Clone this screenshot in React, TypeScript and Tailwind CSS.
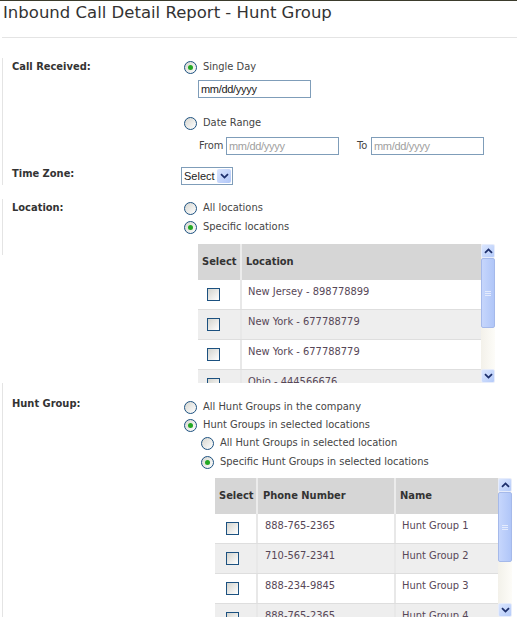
// Inbound Call Detail Report - Hunt Group
const FONT = "font-['DejaVu_Sans_Condensed','DejaVu_Sans',sans-serif]";

function Radio({ checked = false }: { checked?: boolean }) {
  return (
    <span className="flex h-[13px] w-[13px] shrink-0 items-center justify-center rounded-full border border-[#1c5180] bg-[linear-gradient(135deg,#d6d6d0,#ffffff)]">
      {checked && <span className="h-[5px] w-[5px] rounded-full bg-[#23a823]" />}
    </span>
  );
}

function Checkbox() {
  return (
    <span className="block h-[13px] w-[13px] border border-[#1c5180] bg-[linear-gradient(135deg,#d4d4ce,#ffffff)]" />
  );
}

function Chevron({ up = false }: { up?: boolean }) {
  return (
    <svg width="9" height="6" viewBox="0 0 9 6" className={up ? 'rotate-180' : ''}>
      <path d="M1 1.2 L4.5 4.6 L8 1.2" fill="none" stroke="#1d2f6b" strokeWidth="1.8" />
    </svg>
  );
}

function RadioOption({ label, checked, indent = false }: { label: string; checked?: boolean; indent?: boolean }) {
  return (
    <div className={`flex h-[18px] items-center gap-[6px] ${indent ? 'ml-[20px]' : 'ml-[3px]'}`}>
      <Radio checked={checked} />
      <span className="text-[11px] text-[#454545]">{label}</span>
    </div>
  );
}

function DateInput({ placeholder, value }: { placeholder?: string; value?: string }) {
  return (
    <div className="flex h-[18px] w-[113px] items-center border border-[#7f9db9] bg-white px-[2px] font-['Liberation_Sans',sans-serif] text-[11px] tracking-[-0.3px]">
      {value ? <span className="text-[#222]">{value}</span> : <span className="text-[#a0a0a0]">{placeholder}</span>}
    </div>
  );
}

function Scrollbar() {
  return (
    <div className="flex w-[14px] shrink-0 flex-col bg-[linear-gradient(90deg,#f3f1ea,#fdfcf8)]">
      <div className="flex h-[14px] items-center justify-center rounded-[2px] border border-[#e6ecfb] bg-[linear-gradient(135deg,#dbe6fe,#b5cbf9)]">
        <Chevron up />
      </div>
      <div className="flex h-[70px] items-center justify-center rounded-[2px] border border-[#a5b9ea] bg-[linear-gradient(90deg,#c6d6fc,#b0c6f8)]">
        <div className="flex flex-col gap-[1px]">
          <span className="h-px w-[6px] bg-[#e4ebfd]" />
          <span className="h-px w-[6px] bg-[#e4ebfd]" />
          <span className="h-px w-[6px] bg-[#e4ebfd]" />
        </div>
      </div>
      <div className="flex-1" />
      <div className="flex h-[14px] items-center justify-center rounded-[2px] border border-[#e6ecfb] bg-[linear-gradient(135deg,#dbe6fe,#b5cbf9)]">
        <Chevron />
      </div>
    </div>
  );
}

const locations = ['New Jersey - 898778899', 'New York - 677788779', 'New York - 677788779', 'Ohio - 444566676'];

const huntGroups = [
  { phone: '888-765-2365', name: 'Hunt Group 1' },
  { phone: '710-567-2341', name: 'Hunt Group 2' },
  { phone: '888-234-9845', name: 'Hunt Group 3' },
  { phone: '888-765-2365', name: 'Hunt Group 4' },
];

function LocationTable() {
  return (
    <div className="ml-[17px] mt-[8px] flex h-[139px] w-[297px] overflow-hidden">
      <div className="w-[283px] text-[11px]">
        <div className="flex h-[36px] bg-[#d6d6d6] font-bold text-[#333]">
          <div className="flex w-[44px] items-center border-r-2 border-[#ececec] pl-[4px]">Select</div>
          <div className="flex flex-1 items-center pl-[4px]">Location</div>
        </div>
        {locations.map((loc, i) => (
          <div key={i} className={`flex h-[30px] border-b border-[#dedede] ${i % 2 ? 'bg-[#eeeeee]' : 'bg-white'}`}>
            <div className="flex w-[44px] items-center border-r-2 border-[#e8e8e8] pl-[9px]">
              <Checkbox />
            </div>
            <div className="flex-1 pl-[6px] pt-[4px] leading-4 text-[#574757]">{loc}</div>
          </div>
        ))}
      </div>
      <Scrollbar />
    </div>
  );
}

function HuntGroupTable() {
  return (
    <div className="ml-[34px] mt-[7px] flex h-[139px] w-[297px] overflow-hidden">
      <div className="w-[283px] text-[11px]">
        <div className="flex h-[36px] bg-[#d6d6d6] font-bold text-[#333]">
          <div className="flex w-[43px] items-center border-r-2 border-[#ececec] pl-[4px]">Select</div>
          <div className="flex w-[138px] items-center border-r-2 border-[#ececec] pl-[5px]">Phone Number</div>
          <div className="flex flex-1 items-center pl-[4px]">Name</div>
        </div>
        {huntGroups.map((hg, i) => (
          <div key={i} className={`flex h-[30px] border-b border-[#dedede] ${i % 2 ? 'bg-[#eeeeee]' : 'bg-white'}`}>
            <div className="flex w-[43px] items-center border-r-2 border-[#e8e8e8] pl-[11px]">
              <Checkbox />
            </div>
            <div className="w-[138px] border-r-2 border-[#e8e8e8] pl-[7px] pt-[4px] leading-4 text-[#574757]">{hg.phone}</div>
            <div className="flex-1 pl-[6px] pt-[4px] leading-4 text-[#574757]">{hg.name}</div>
          </div>
        ))}
      </div>
      <Scrollbar />
    </div>
  );
}

function Label({ children }: { children: string }) {
  return <div className="flex h-[18px] items-center text-[11px] font-bold text-[#333]">{children}</div>;
}

export default function App() {
  return (
    <div className={`min-h-[621px] w-[517px] border-t border-[#3b3b2c] bg-white ${FONT}`}>
      {/* 标题 */}
      <h1 className="h-[36px] pl-[3px] pt-[1px] font-['DejaVu_Sans',sans-serif] text-[16.5px] leading-[22px] text-[#333]">
        Inbound Call Detail Report - Hunt Group
      </h1>

      <div className="ml-[2px] border-t border-[#e4e4e4]">
        {/* Call Received */}
        <div className="flex pt-[20px]">
          <div className="w-[179px] shrink-0 border-l border-[#e4e4e4] pl-[9px]">
            <Label>Call Received:</Label>
          </div>
          <div className="flex flex-col">
            <RadioOption label="Single Day" checked />
            <div className="ml-[17px] mt-[4px]">
              <DateInput value="mm/dd/yyyy" />
            </div>
            <div className="mt-[16px]">
              <RadioOption label="Date Range" />
            </div>
            <div className="mt-[5px] flex items-center">
              <span className="ml-[18px] w-[27px] text-[11px] text-[#454545]">From</span>
              <DateInput placeholder="mm/dd/yyyy" />
              <span className="ml-[18px] w-[14px] text-[11px] text-[#454545]">To</span>
              <DateInput placeholder="mm/dd/yyyy" />
            </div>
          </div>
        </div>

        {/* Time Zone */}
        <div className="flex">
          <div className="w-[179px] shrink-0 border-l border-[#e4e4e4] pl-[9px] pt-[10px]">
            <Label>Time Zone:</Label>
          </div>
          <div className="pt-[12px]">
            <div className="flex h-[18px] w-[52px] items-center border border-[#7f9db9] bg-white pl-[2px] pr-px font-['Liberation_Sans',sans-serif] text-[11px] text-[#222]">
              <span className="flex-1">Select</span>
              <span className="flex h-[14px] w-[14px] items-center justify-center rounded-[2px] bg-[linear-gradient(135deg,#dbe6fe,#b0c6f8)]">
                <Chevron />
              </span>
            </div>
          </div>
        </div>

        {/* Location */}
        <div className="flex pt-[14px]">
          <div className="h-[56px] w-[179px] shrink-0 self-start border-l border-[#e4e4e4] pl-[9px]">
            <Label>Location:</Label>
          </div>
          <div className="flex flex-col">
            <RadioOption label="All locations" />
            <div className="mt-px">
              <RadioOption label="Specific locations" checked />
            </div>
            <LocationTable />
          </div>
        </div>

        {/* Hunt Group */}
        <div className="flex">
          <div className="w-[179px] shrink-0 border-l border-[#e4e4e4] pl-[9px] pt-[12px]">
            <Label>Hunt Group:</Label>
          </div>
          <div className="flex flex-col pt-[15px]">
            <RadioOption label="All Hunt Groups in the company" />
            <RadioOption label="Hunt Groups in selected locations" checked />
            <RadioOption label="All Hunt Groups in selected location" indent />
            <div className="mt-px">
              <RadioOption label="Specific Hunt Groups in selected locations" checked indent />
            </div>
            <HuntGroupTable />
          </div>
        </div>
      </div>
    </div>
  );
}
